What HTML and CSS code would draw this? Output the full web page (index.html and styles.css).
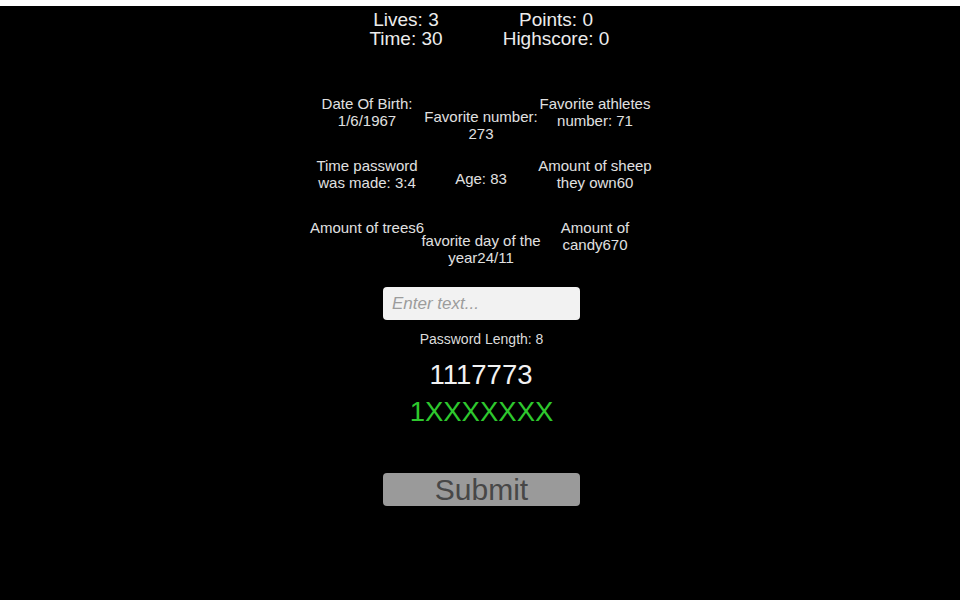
FILE: index.html
```html
<!DOCTYPE html>
<html lang="en">
<head>
<meta charset="utf-8">
<title>Password Game</title>
<link rel="stylesheet" href="styles.css">
</head>
<body>
<div class="strip"></div>
<main class="screen">
  <header class="hud">
    <div class="hud-col">
      <div>Lives: 3</div>
      <div>Time: 30</div>
    </div>
    <div class="hud-col">
      <div>Points: 0</div>
      <div>Highscore: 0</div>
    </div>
  </header>

  <section class="clues">
    <div class="clue">Date Of Birth:<br>1/6/1967</div>
    <div class="clue mid">Favorite number:<br>273</div>
    <div class="clue">Favorite athletes<br>number: 71</div>

    <div class="clue">Time password<br>was made: 3:4</div>
    <div class="clue mid">Age: 83</div>
    <div class="clue">Amount of sheep<br>they own60</div>

    <div class="clue">Amount of trees6</div>
    <div class="clue mid">favorite day of the<br>year24/11</div>
    <div class="clue">Amount of<br>candy670</div>
  </section>

  <input class="entry" type="text" placeholder="Enter text...">
  <div class="length">Password Length: 8</div>
  <div class="code">1117773</div>
  <div class="guess">1XXXXXXX</div>
  <button class="submit" type="button">Submit</button>
</main>
</body>
</html>
```
FILE: styles.css
```css
html, body {
  margin: 0;
  padding: 0;
  background: #ffffff;
}

body {
  font-family: "Liberation Sans", Arial, sans-serif;
  width: 960px;
  height: 600px;
  overflow: hidden;
}

.strip {
  height: 6px;
  background: #ffffff;
}

.screen {
  height: 594px;
  background: #000000;
  color: #e8e8e8;
  display: flex;
  flex-direction: column;
  align-items: center;
}

.hud {
  display: flex;
  gap: 20px;
  padding-top: 4px;
  margin-left: 2px;
}

.hud-col {
  width: 130px;
  text-align: center;
  font-size: 19px;
  line-height: 19px;
  color: #ececec;
}

.clues {
  margin-top: 47px;
  margin-left: 2px;
  display: grid;
  grid-template-columns: repeat(3, 114px);
  grid-auto-rows: 62px;
  align-items: start;
  font-size: 15px;
  line-height: 17px;
  color: #e0e0e0;
}

.clue {
  text-align: center;
  white-space: nowrap;
  display: flex;
  justify-content: center;
}

.clue.mid {
  padding-top: 13px;
}

.entry {
  box-sizing: border-box;
  width: 197px;
  height: 33px;
  margin-top: 6px;
  margin-left: 3px;
  border: none;
  border-radius: 4px;
  background: #f2f2f2;
  padding: 0 9px;
  font-family: "Liberation Sans", Arial, sans-serif;
  font-size: 17px;
  color: #333333;
  outline: none;
}

.entry::placeholder {
  color: #9c9c9c;
  font-style: italic;
}

.length {
  margin-top: 11px;
  margin-left: 3px;
  font-size: 14px;
  line-height: 17px;
  color: #dcdcdc;
}

.code {
  margin-top: 12px;
  margin-left: 2px;
  font-size: 27.5px;
  line-height: 30px;
  color: #f2f2f2;
}

.guess {
  margin-top: 7px;
  margin-left: 3px;
  font-size: 27.5px;
  line-height: 30px;
  color: #2ec82e;
}

.submit {
  box-sizing: border-box;
  width: 197px;
  height: 33px;
  margin-top: 46px;
  margin-left: 3px;
  border: none;
  border-radius: 4px;
  background: #9a9a9a;
  color: #474747;
  font-family: "Liberation Sans", Arial, sans-serif;
  font-size: 30px;
  line-height: 33px;
  padding: 0;
}
```
